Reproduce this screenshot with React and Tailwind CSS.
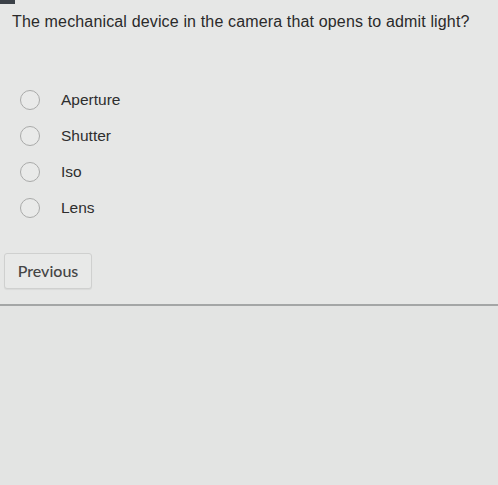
import React, { useState } from 'react';

const options = ['Aperture', 'Shutter', 'Iso', 'Lens'];

const App = () => {
    const [selected, setSelected] = useState(null);

    return (
        <div className="w-[498px] h-[485px] bg-[#e6e7e6] relative overflow-hidden" style={{ fontFamily: '"Liberation Sans", Arial, sans-serif' }}>
            {/* top-left tab marker */}
            <div className="absolute left-0 top-0 w-[15px] h-[4px] bg-[#3b4148]" />

            <div className="pl-[12px] pt-[12px]">
                <h1 className="text-[16px] leading-[20px] text-[#2a2a2a] tracking-[0.15px]">
                    The mechanical device in the camera that opens to admit light?
                </h1>
            </div>

            {/* Options */}
            <div className="mt-[58px] flex flex-col gap-[16px] pl-[20px]">
                {options.map((opt) => (
                    <label key={opt} className="flex items-center h-[20px] cursor-pointer" onClick={() => setSelected(opt)}>
                        <span className="w-[20px] h-[20px] rounded-full border-[1.5px] border-[#a9aaa9] bg-[#e9eae9] flex items-center justify-center">
                            {selected === opt && <span className="w-[10px] h-[10px] rounded-full bg-[#555]" />}
                        </span>
                        <span className="ml-[21px] text-[15.5px] text-[#2e2e2e]">{opt}</span>
                    </label>
                ))}
            </div>

            {/* Previous */}
            <div className="pl-[4px] mt-[35px]">
                <button
                    className="w-[88px] h-[36px] rounded-[3px] border border-[#cfd0cf] bg-[#e8e9e8] text-[16px] text-[#454545] shadow-[0_1px_1px_rgba(0,0,0,0.06)]"
                    style={{ fontFamily: 'Lato, "Open Sans", sans-serif', fontWeight: 500 }}
                >
                    Previous
                </button>
            </div>

            <div className="mt-[15px] h-[2px] bg-[#a4a6a6]" />
            <div className="h-[200px] bg-[#e3e4e3]" />
        </div>
    );
};

export default App;
